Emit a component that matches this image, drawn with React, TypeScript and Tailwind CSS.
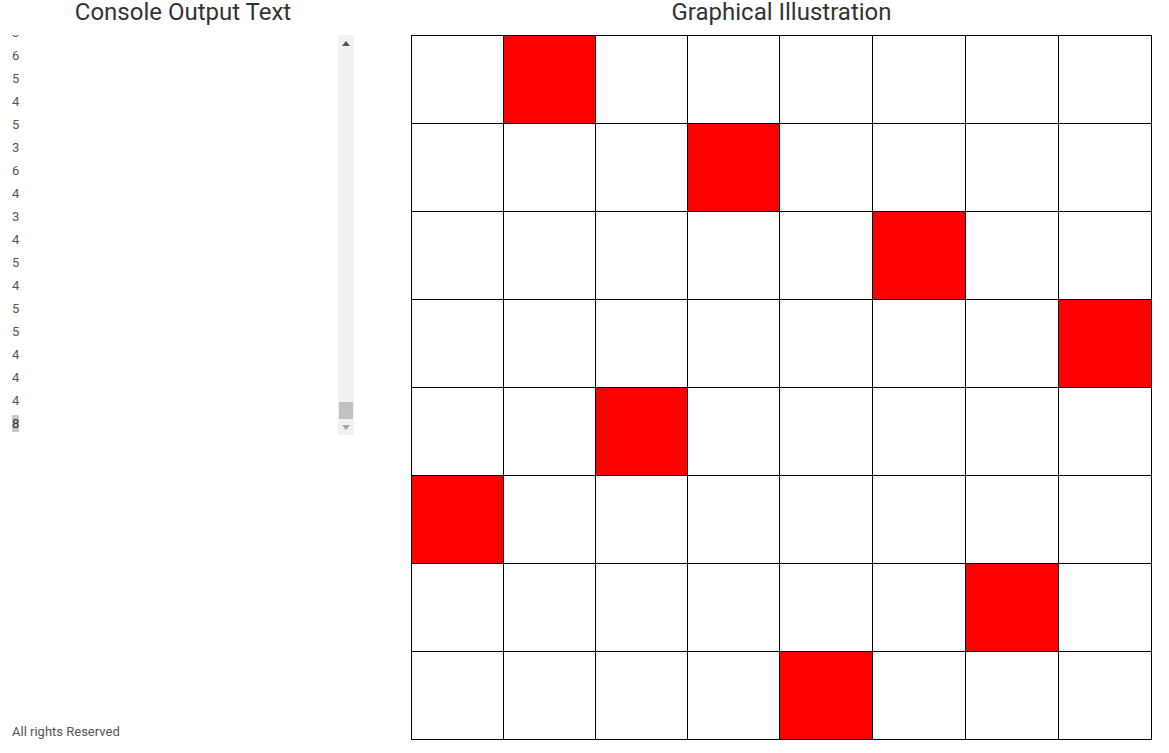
import React from 'react';

const queens = [1, 3, 5, 7, 2, 0, 6, 4];

// last lines of the solver log, the box is scrolled to the bottom
const lines = [3, 6, 5, 4, 5, 3, 6, 4, 3, 4, 5, 4, 5, 5, 4, 4, 4];

const App: React.FC = () => {
    return (
        <div className="flex h-[753px] bg-white font-['Roboto',sans-serif] text-[#555]">
            <div className="flex w-[366px] flex-col">
                <h2 className="h-[35px] text-center text-[24px] leading-[24px] font-normal text-[#333]">Console Output Text</h2>
                <div className="ml-[8px] flex h-[400px] w-[346px]">
                    <div className="flex flex-1 flex-col justify-end overflow-hidden">
                        {lines.map((n, i) => (
                            <div key={i} className="shrink-0 pl-[4px] text-[13px] leading-[23px]">{n}</div>
                        ))}
                        <div className="shrink-0 pl-[4px] text-[13px] leading-[23px]">
                            <span className="bg-[#c8c8c8] py-[1px] text-[#333]">8</span>
                        </div>
                    </div>
                    <div className="flex w-[16px] flex-col bg-[#f1f1f1]">
                        <div className="flex h-[16px] items-center justify-center">
                            <svg width="8" height="5" viewBox="0 0 8 5"><path d="M0 5 L4 0 L8 5 Z" fill="#505050" /></svg>
                        </div>
                        <div className="flex flex-1 flex-col justify-end px-[1px]">
                            <div className="h-[17px] bg-[#c1c1c1]" />
                        </div>
                        <div className="flex h-[16px] items-center justify-center">
                            <svg width="8" height="5" viewBox="0 0 8 5"><path d="M0 0 L8 0 L4 5 Z" fill="#a3a3a3" /></svg>
                        </div>
                    </div>
                </div>
                <div className="mt-auto pb-[13px] pl-[12px] text-[13px] leading-[16px]">All rights Reserved</div>
            </div>

            <div className="ml-[45px] flex w-[741px] flex-col">
                <h2 className="h-[35px] text-center text-[24px] leading-[24px] font-normal text-[#333]">Graphical Illustration</h2>
                <div className="grid h-[705px] grid-cols-[92px_92px_92px_92px_93px_93px_93px_93px] grid-rows-8 border-t border-l border-black">
                    {queens.map((q, r) =>
                        Array.from({ length: 8 }).map((_, c) => (
                            <div
                                key={`${r}-${c}`}
                                className={`border-r border-b border-black ${c === q ? 'bg-[#ff0000]' : 'bg-white'}`}
                            />
                        ))
                    )}
                </div>
            </div>
        </div>
    );
};

export default App;
